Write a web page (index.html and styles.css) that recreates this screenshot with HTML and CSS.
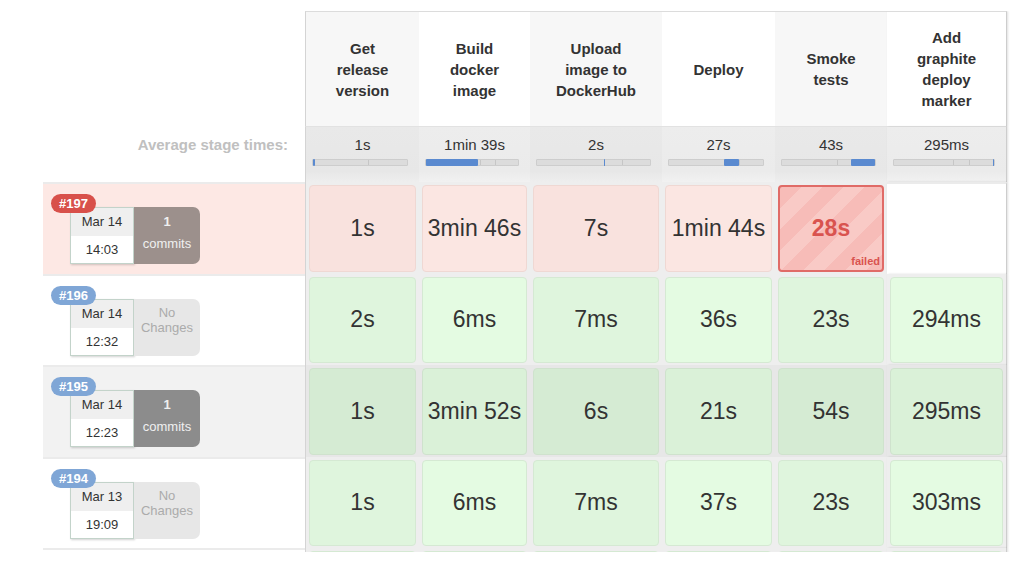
FILE: index.html
```html
<!DOCTYPE html>
<html lang="en">
<head>
<meta charset="UTF-8">
<title>Stage View</title>
<link rel="stylesheet" href="styles.css">
</head>
<body>
<div class="board">
  <div class="grid">
    <!-- header -->
    <div class="corner"></div>
    <div class="stage-name alt first">Get<br>release<br>version</div>
    <div class="stage-name">Build<br>docker<br>image</div>
    <div class="stage-name alt">Upload<br>image to<br>DockerHub</div>
    <div class="stage-name">Deploy</div>
    <div class="stage-name alt">Smoke<br>tests</div>
    <div class="stage-name last">Add<br>graphite<br>deploy<br>marker</div>

    <!-- averages -->
    <div class="avg-label">Average stage times:</div>
    <div class="avg alt first">1s<div class="bar"><i style="left:0.5%;width:1.5%"></i></div></div>
    <div class="avg">1min 39s<div class="bar"><i style="left:0;width:57%"></i></div></div>
    <div class="avg alt">2s<div class="bar"><i style="left:59%;width:1.5%"></i></div></div>
    <div class="avg">27s<div class="bar"><i style="left:59%;width:15%"></i></div></div>
    <div class="avg alt">43s<div class="bar"><i style="left:74%;width:26%"></i></div></div>
    <div class="avg last">295ms<div class="bar"><i style="left:98.5%;width:1.5%"></i></div></div>

    <!-- #197 -->
    <div class="run run-fail">
      <span class="badge badge-red">#197</span>
      <div class="stamp"><div class="date">Mar 14</div><div class="time">14:03</div></div>
      <div class="changes commits commits-warm"><b>1</b><br>commits</div>
    </div>
    <div class="cell alt first"><div class="card pink">1s</div></div>
    <div class="cell"><div class="card pink">3min 46s</div></div>
    <div class="cell alt"><div class="card pink">7s</div></div>
    <div class="cell"><div class="card pink">1min 44s</div></div>
    <div class="cell alt"><div class="card broken">28s<span class="failed-tag">failed</span></div></div>
    <div class="cell empty last"></div>

    <!-- #196 -->
    <div class="run">
      <span class="badge">#196</span>
      <div class="stamp"><div class="date">Mar 14</div><div class="time">12:32</div></div>
      <div class="changes none">No<br>Changes</div>
    </div>
    <div class="cell alt first"><div class="card green">2s</div></div>
    <div class="cell"><div class="card green">6ms</div></div>
    <div class="cell alt"><div class="card green">7ms</div></div>
    <div class="cell"><div class="card green">36s</div></div>
    <div class="cell alt"><div class="card green">23s</div></div>
    <div class="cell last"><div class="card green">294ms</div></div>

    <!-- #195 -->
    <div class="run run-grey">
      <span class="badge">#195</span>
      <div class="stamp"><div class="date">Mar 14</div><div class="time">12:23</div></div>
      <div class="changes commits"><b>1</b><br>commits</div>
    </div>
    <div class="cell grey alt first"><div class="card deep">1s</div></div>
    <div class="cell grey"><div class="card deep">3min 52s</div></div>
    <div class="cell grey alt"><div class="card deep">6s</div></div>
    <div class="cell grey"><div class="card deep">21s</div></div>
    <div class="cell grey alt"><div class="card deep">54s</div></div>
    <div class="cell grey last"><div class="card deep">295ms</div></div>

    <!-- #194 -->
    <div class="run">
      <span class="badge">#194</span>
      <div class="stamp"><div class="date">Mar 13</div><div class="time">19:09</div></div>
      <div class="changes none">No<br>Changes</div>
    </div>
    <div class="cell alt first"><div class="card green">1s</div></div>
    <div class="cell"><div class="card green">6ms</div></div>
    <div class="cell alt"><div class="card green">7ms</div></div>
    <div class="cell"><div class="card green">37s</div></div>
    <div class="cell alt"><div class="card green">23s</div></div>
    <div class="cell last"><div class="card green">303ms</div></div>

    <!-- next row, cut off by the window -->
    <div class="run"></div>
    <div class="cell alt first"><div class="card green"></div></div>
    <div class="cell"><div class="card green"></div></div>
    <div class="cell alt"><div class="card green"></div></div>
    <div class="cell"><div class="card green"></div></div>
    <div class="cell alt"><div class="card green"></div></div>
    <div class="cell last"><div class="card green"></div></div>
  </div>
</div>
</body>
</html>
```

FILE: styles.css
```css
body {
  margin: 0;
  font-family: "Liberation Sans", Arial, sans-serif;
  color: #333;
  background: #fff;
}

.board {
  height: 541px;
  margin: 11px 0 0 43px;
  overflow: hidden;
}

.grid {
  display: grid;
  grid-template-columns: 262px 114px 111px 132px 113px 112px 120px;
  grid-template-rows: 116px 55px repeat(5, 91.5px);
}

.grid > div {
  box-sizing: border-box;
}

/* stage table edges */
.first {
  border-left: 1px solid #d4d4d4;
}

.last {
  border-right: 1px solid #cdcdcd;
  box-shadow: 1px 0 2px rgba(0, 0, 0, 0.12);
}

/* header */
.stage-name {
  display: flex;
  align-items: center;
  justify-content: center;
  text-align: center;
  font-weight: bold;
  font-size: 15px;
  line-height: 21px;
  background: #fff;
  border-top: 1px solid #dcdcdc;
  border-bottom: 1px solid #e2e2e2;
}

.stage-name.alt {
  background: #f7f7f7;
}

.avg-label {
  text-align: right;
  padding: 9px 17px 0 0;
  font-size: 15px;
  line-height: 18px;
  font-weight: bold;
  color: #c0c0c0;
}

.avg {
  text-align: center;
  padding-top: 9px;
  font-size: 15px;
  line-height: 18px;
  background: linear-gradient(#ededed 0, #ebebeb 80%, #f1f1f1 100%);
}

.avg.alt {
  background: linear-gradient(#e9e9e9 0, #e7e7e7 80%, #eeeeee 100%);
}

.bar {
  position: relative;
  height: 5px;
  margin: 5px 11px 0 6px;
  background-color: #dcdcdc;
  background-image:
    linear-gradient(90deg, transparent 59%, #c6c6c6 59%, #c6c6c6 60%, transparent 60%),
    linear-gradient(90deg, transparent 75%, #c6c6c6 75%, #c6c6c6 76%, transparent 76%);
  border: 1px solid #cdcdcd;
  border-radius: 1px;
}

.bar i {
  position: absolute;
  top: -1px;
  bottom: -1px;
  background: #5a8ad0;
  border-radius: 1px;
}

/* run column */
.run {
  position: relative;
  display: flex;
  align-items: flex-start;
  padding: 23px 0 0 27px;
  border-top: 2px solid #ebebeb;
  background: #fff;
}

.run-fail {
  background: #fde8e4;
}

.run-grey {
  background: #f2f2f2;
}

.badge {
  position: absolute;
  left: 8px;
  top: 10px;
  z-index: 1;
  height: 19px;
  line-height: 19px;
  padding: 0 8px;
  border-radius: 10px;
  font-size: 13px;
  font-weight: bold;
  color: #fff;
  background: #7fa6d6;
}

.badge-red {
  background: #d8504a;
}

.stamp {
  width: 64px;
  height: 57px;
  box-sizing: border-box;
  border: 1px solid #c3d3ca;
  background: #fff;
  box-shadow: 1px 1px 2px rgba(0, 0, 0, 0.18);
  font-size: 13px;
  text-align: center;
}

.date {
  height: 28px;
  line-height: 28px;
  background: #efefef;
}

.time {
  line-height: 28px;
}

.changes {
  width: 66px;
  height: 57px;
  box-sizing: border-box;
  border-radius: 0 7px 7px 0;
  text-align: center;
  font-size: 13px;
}

.commits {
  padding-top: 4px;
  line-height: 22px;
  color: #f0f0f0;
  background: #8c8c8c;
}

.commits-warm {
  background: #9c908c;
}

.none {
  padding-top: 6px;
  line-height: 15px;
  color: #ababab;
  background: #e7e7e7;
}

/* stage cells */
.cell {
  padding: 3px 3px 2px;
  background: #eeeeee;
}

.cell.grey {
  background: #e7e7e7;
}

.cell.empty {
  background: #fff;
  border-top: 2px solid #ebebeb;
}

.card {
  position: relative;
  height: 100%;
  box-sizing: border-box;
  display: flex;
  align-items: center;
  justify-content: center;
  border: 1px solid transparent;
  border-radius: 4px;
  font-size: 23px;
}

.pink {
  background: #fbe6e2;
  border-color: #efd8d3;
}

.alt .pink {
  background: #f9e2de;
}

.green {
  background: #e4fbe2;
  border-color: #d5e9d3;
}

.alt .green {
  background: #dff5dd;
}

.deep {
  background: #daf1d8;
  border-color: #cfe2cd;
}

.alt .deep {
  background: #d5ebd3;
}

.broken {
  border: 2px solid #e06b67;
  background: repeating-linear-gradient(135deg, #f7bcb8 0, #f7bcb8 15px, #f9cac6 15px, #f9cac6 30px);
  color: #d9534f;
  font-weight: bold;
}

.failed-tag {
  position: absolute;
  right: 2px;
  bottom: 3px;
  font-size: 11px;
  line-height: 12px;
  font-weight: bold;
}
```
